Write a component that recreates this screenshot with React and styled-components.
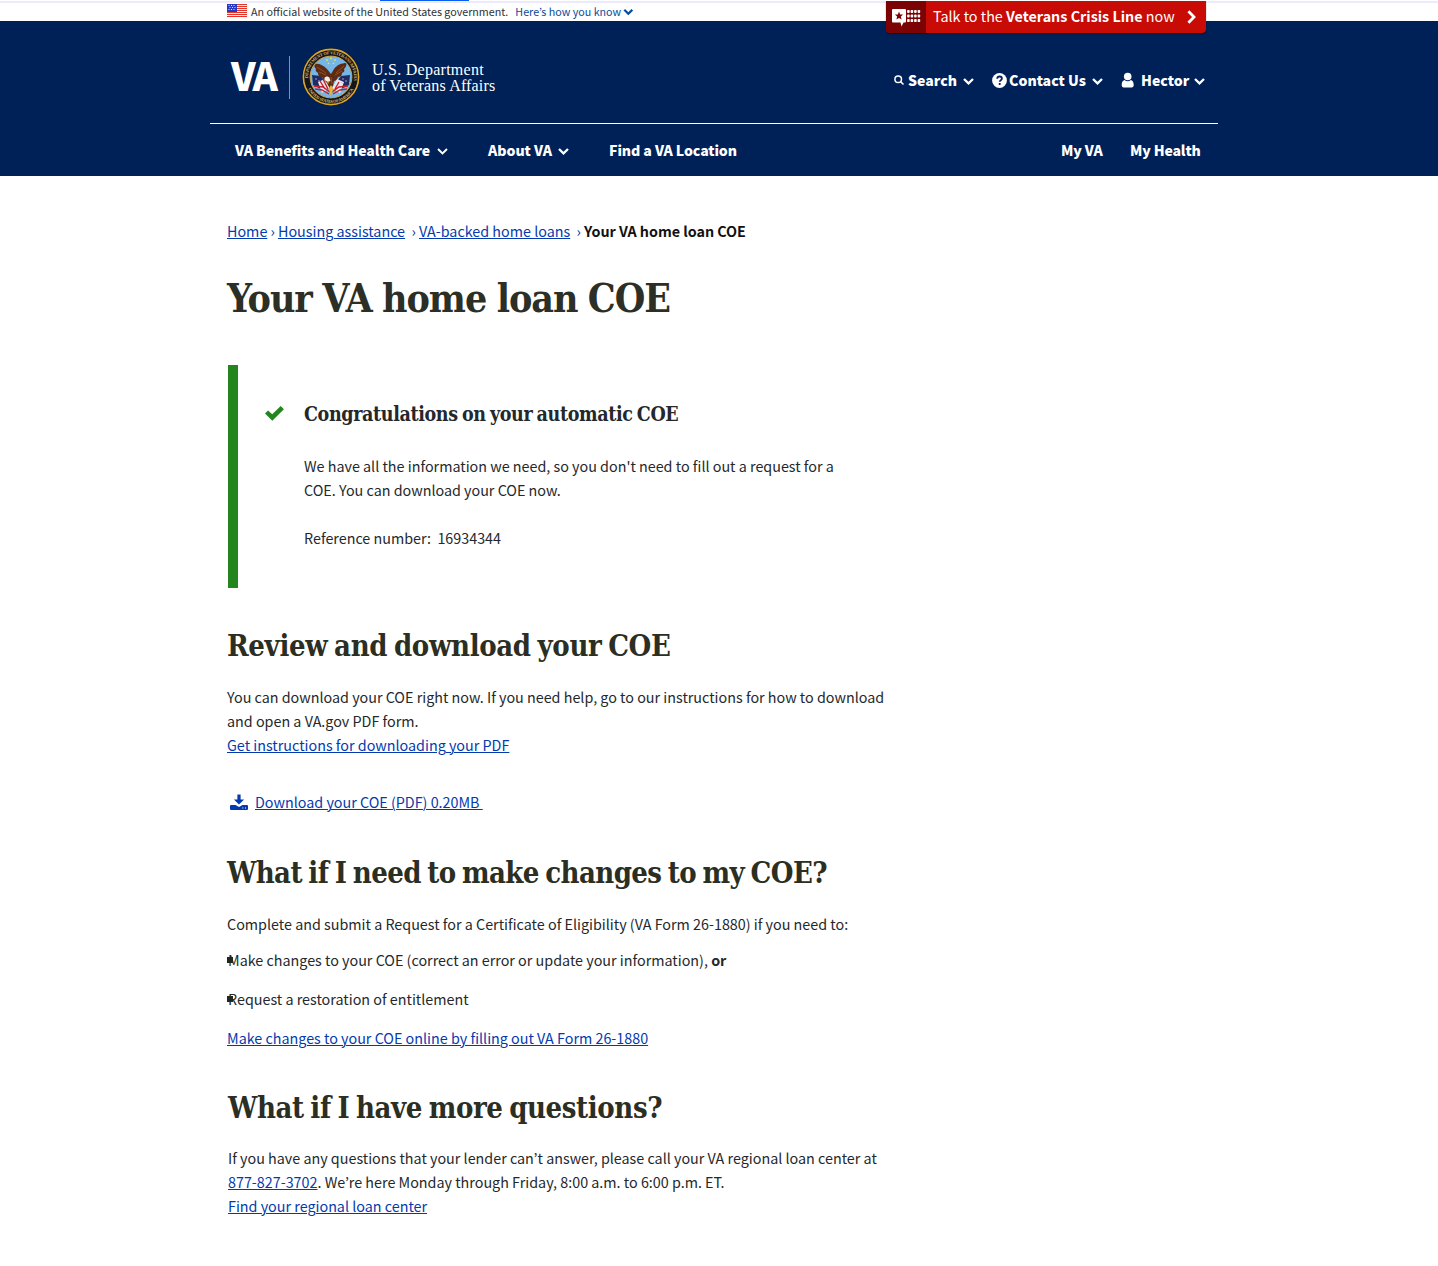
import React from "react";
import styled, { createGlobalStyle } from "styled-components";

const navy = "#002157";
const link = "#043aae";
const sans = '"Noto Sans CJK KR","Noto Sans CJK SC","Open Sans",sans-serif';
const slab = '"DejaVu Serif Condensed","DejaVu Serif",serif';

const Global = createGlobalStyle`
  body { margin: 0; background: #fff; color: #24282c; font: 400 14.33px/24px ${sans}; }
  h1, h2, h3, p, ul { margin: 0; padding: 0; }
  svg { display: block; flex: none; }
`;

const Page = styled.div`
  min-height: 1266px;
  position: relative;
`;

const GovBanner = styled.div`
  height: 21px;
  box-sizing: border-box;
  padding: 3px 0 0 227px;
  display: flex;
  align-items: flex-start;
  background: linear-gradient(#fff 0 1px, #ecebfd 1px 3px, #fff 3px);
`;

const BannerText = styled.span`
  height: 18px;
  white-space: pre;
  font-size: 10.72px;
  line-height: 18px;
  color: ${p => p.$color || "#2c2f38"};
  margin-left: ${p => p.$gap}px;
`;

const LoadingStrip = styled.div`
  position: absolute;
  top: 0;
  left: 380px;
  width: 89px;
  height: 1px;
  background: #0b5ff0;
`;

const CrisisLine = styled.a`
  position: absolute;
  top: 1px;
  left: 886px;
  width: 320px;
  height: 32px;
  display: flex;
  align-items: center;
  background: #c90b05;
  border-radius: 0 0 4px 4px;
  box-shadow: 0 1px 1px 0 #100818;
  color: #fff;
`;

const CrisisBadge = styled.span`
  width: 40px;
  height: 32px;
  box-sizing: border-box;
  padding: 8px 0 0 6px;
  background: #7c0303;
  border-radius: 0 0 0 4px;
`;

const CrisisText = styled.span`
  width: 242px;
  margin: 0 12px 2px 7px;
  white-space: nowrap;
  font-size: 14.33px;
`;

const Header = styled.header`
  height: 155px;
  background: ${navy};
  color: #fff;
`;

const HeaderInner = styled.div`
  width: 1008px;
  margin-left: 210px;
`;

const Masthead = styled.div`
  height: 102px;
  box-sizing: border-box;
  padding: 0 13px 0 21px;
  display: flex;
  align-items: flex-start;
  justify-content: space-between;
`;

const Logo = styled.div`
  display: flex;
  align-items: flex-start;
`;

const Wordmark = styled.span`
  margin-top: 29px;
  width: 58px;
  font-size: 38.5px;
  font-weight: 900;
  line-height: 48px;
  letter-spacing: -2.4px;
`;

const Rule = styled.span`
  width: 1px;
  height: 43px;
  margin-top: 35px;
  background: #8391ad;
`;

const SealBox = styled.div`
  margin: 27px 12px 0 12px;
`;

const Department = styled.div`
  margin-top: 41px;
  font: 400 16px/16px "Liberation Serif", serif;
`;

const DeptLine = styled.div`
  height: 16px;
  letter-spacing: ${p => p.$spacing}px;
  white-space: nowrap;
`;

const Tools = styled.div`
  display: flex;
  align-items: center;
  height: 24px;
  margin-top: 47px;
`;

const Tool = styled.a`
  display: flex;
  align-items: center;
  margin-left: ${p => p.$gap}px;
`;

const ToolLabel = styled.span`
  width: ${p => p.$width}px;
  margin: 0 ${p => p.$after}px 0 ${p => p.$before}px;
  font-weight: 900;
  font-size: 14.1px;
  white-space: nowrap;
`;

const Nav = styled.nav`
  height: 52px;
  border-top: 1px solid #fff;
  box-sizing: border-box;
  padding: 14px 0 0 25px;
  display: flex;
`;

const NavItem = styled.a`
  display: flex;
  align-items: center;
  height: 24px;
  width: ${p => p.$width}px;
  font-weight: 900;
  font-size: 14.1px;
  white-space: nowrap;
  letter-spacing: ${p => p.$spacing || 0}px;
`;

const NavLabel = styled.span`
  width: ${p => p.$width}px;
  margin-right: 7px;
`;

const ChevronBox = styled.span`
  padding-top: 2px;
`;

const Main = styled.main`
  width: 700px;
  padding: 43px 0 0 227px;
`;

const Crumbs = styled.nav`
  display: flex;
  height: 24px;
  white-space: pre;
`;

const Crumb = styled.span`
  width: ${p => p.$width}px;
  font-weight: ${p => (p.$current ? 700 : 400)};
  color: ${p => (p.$current ? "#111" : link)};
  letter-spacing: ${p => (p.$current ? "-0.03px" : "0")};
`;

const Link = styled.a`
  color: ${link};
  text-decoration: underline;
  text-decoration-thickness: 1px;
  text-underline-offset: 1px;
  white-space: pre;
`;

const Title = styled.h1`
  margin-top: 31px;
  padding-bottom: 1px;
  font: 700 39px/48px ${slab};
  letter-spacing: -1.08px;
  word-spacing: -0.6px;
  color: #2c2f26;
  white-space: nowrap;
`;

const Heading = styled.h2`
  margin: ${p => p.$top}px 0 0 ${p => p.$indent || 0}px;
  font: 700 29px/36px ${slab};
  letter-spacing: ${p => p.$spacing}px;
  word-spacing: -2px;
  color: #2b2e22;
  white-space: nowrap;
`;

const Alert = styled.section`
  margin: 42px 0 0 1px;
  height: 223px;
  box-sizing: border-box;
  border-left: 10px solid #23851e;
  padding: 37px 0 0 27px;
  display: flex;
`;

const AlertBody = styled.div`
  margin-left: 20px;
`;

const AlertTitle = styled.h3`
  font: 700 19.5px/24px ${slab};
  letter-spacing: -0.37px;
  word-spacing: -1.5px;
  white-space: nowrap;
  margin-bottom: 27px;
  padding-top: 1px;
`;

const CheckBox = styled.div`
  margin-top: 4px;
`;

const Text = styled.p`
  margin: ${p => p.$top || 0}px 0 0 ${p => p.$indent || 0}px;
  white-space: pre;
`;

const Download = styled.div`
  display: flex;
  align-items: center;
  margin: 33px 0 0 3px;
  gap: 7px;
`;

const List = styled.ul`
  margin-top: 12px;
  list-style: none;
  display: grid;
  gap: 15px;
`;

const Item = styled.li`
  height: 24px;
  padding-left: 1px;
  position: relative;
  white-space: pre;
  &::before {
    content: "";
    position: absolute;
    left: 0;
    top: 9px;
    width: 6px;
    height: 6px;
    background: #22261e;
  }
`;

const Chevron = ({ sw = 2.3 }) => (
  <ChevronBox>
    <svg width="11" height="7" viewBox="0 0 11 7" fill="none" stroke="#fff" strokeWidth={sw}>
      <path d="M1 1 5.5 5.4 10 1" />
    </svg>
  </ChevronBox>
);

const Flag = () => (
  <svg width="20" height="14" viewBox="0 -1 20 14">
    <rect width="20" height="13" fill="#fff" />
    {[0, 2, 4, 6, 8, 10, 12].map(y => <rect key={y} y={y} width="20" height="1.1" fill="#e3342a" />)}
    <rect width="10" height="8" fill="#2438c4" />
    {[1, 3, 5].map(y => [1.5, 4, 6.5].map(x => <rect key={`${x}-${y}`} x={x + (y === 3 ? 1 : 0)} y={y} width="1" height="1" fill="#dfe3ff" />))}
  </svg>
);

const CrisisIcon = () => (
  <svg width="29" height="18" viewBox="0 0 29 18" fill="#fff">
    <path d="M1 0h12a1 1 0 0 1 1 1v11.500a1 1 0 0 1-1 1h-1.500L9.500 17.500 8.500 13.500H1a1 1 0 0 1-1-1V1a1 1 0 0 1 1-1z" />
    <path fill="#7c0303" d="m7 2.600 1.150 2.800 3 .2-2.300 1.950.75 2.950L7 8.900l-2.600 1.600.75-2.950L2.850 5.600l3-.2z" />
    {[2.4, 7, 11.6].map(y => [16.4, 19.9, 23.4, 26.900].map(x => <rect key={`${x}-${y}`} x={x - 1.300} y={y - 1.500} width="2.600" height="3" rx=".9" />))}
  </svg>
);

const NextIcon = () => (
  <svg width="9" height="14" viewBox="0 0 9 14" fill="none" stroke="#fff" strokeWidth="2.800">
    <path d="M1.400 1.200 7 7l-5.600 5.800" />
  </svg>
);

const SearchIcon = () => (
  <svg width="10" height="10" viewBox="0 0 10 10" fill="none" stroke="#fff" strokeWidth="1.500">
    <circle cx="4.200" cy="4.200" r="3.300" />
    <path d="m6.600 6.600 2.900 2.900" />
  </svg>
);

const HelpIcon = () => (
  <svg width="15" height="15" viewBox="0 0 15 15">
    <circle cx="7.500" cy="7.500" r="7.400" fill="#fff" />
    <path d="M5.200 5.700C5.300 4.200 6.300 3.500 7.600 3.500c1.300 0 2.300.8 2.300 2 0 1.700-2.200 1.600-2.200 3.300" fill="none" stroke={navy} strokeWidth="1.800" />
    <rect x="6.700" y="9.900" width="2" height="2" rx=".6" fill={navy} />
  </svg>
);

const UserIcon = () => (
  <svg width="13" height="16" viewBox="-.7 -.5 13 16" fill="#fff">
    <circle cx="6" cy="4" r="3.800" />
    <path d="M2.800 7.600c1.900 1.600 4.500 1.600 6.400 0 2 .5 2.800 2.400 2.800 5 0 1.500-.8 2.400-2 2.400H2C.8 15 0 14.100 0 12.600 0 10 .8 8.100 2.800 7.600z" />
  </svg>
);

const CheckIcon = () => (
  <svg width="19" height="15" viewBox="0 0 19 15">
    <path fill="#23851e" d="m0 7.500 3.100-3.100L7.200 8.300 15.700.1l3.200 3.100L7.300 14.700z" />
  </svg>
);

const DownloadIcon = () => (
  <svg width="18" height="16" viewBox="0 -.5 18 16" fill={link}>
    <path d="M7.400 0h3.200v5h3.500L9 10.100 3.900 5h3.500z" />
    <path d="M1 10.500h4.500L9 12.400l3.500-1.900H17a1 1 0 0 1 1 1v3a1 1 0 0 1-1 1H1a1 1 0 0 1-1-1v-3a1 1 0 0 1 1-1z" />
    <path fill="#fff" d="M12.300 13h1v1h-1zM15 13h1v1h-1z" />
  </svg>
);

const Seal = () => (
  <svg width="58" height="58" viewBox="2 2 58 58">
    <defs>
      <path id="arcTop" d="M8.300 35A23 23 0 1 1 53.700 35" />
      <path id="arcBottom" d="M6.500 39A25.700 25.700 0 0 0 55.500 39" />
      <clipPath id="disc"><circle cx="31" cy="31" r="20.300" /></clipPath>
    </defs>
    <circle cx="31" cy="31" r="28.800" fill="#16120c" />
    <circle cx="31" cy="31" r="27.600" fill="#14161c" stroke="#d9a62e" strokeWidth="1.600" />
    <circle cx="31" cy="31" r="20.900" fill="#74b6e8" stroke="#c9a24a" strokeWidth="1" />
    <g fill="#d9b866" fontFamily="Liberation Serif, serif" fontWeight="700" fontSize="4.400">
      <text><textPath href="#arcTop" startOffset="3" textLength="76">DEPARTMENT OF VETERANS AFFAIRS</textPath></text>
      <text><textPath href="#arcBottom" startOffset="4" textLength="56">UNITED STATES OF AMERICA</textPath></text>
    </g>
    <g clipPath="url(#disc)">
      <g fill="#e8e052">
        {[[31, 12.500], [27, 14], [35, 14], [28.500, 17.300], [33.500, 17.300]].map(([x, y]) => <circle key={x} cx={x} cy={y} r=".9" />)}
      </g>
      <path fill="#222c63" d="M12 29 21 30 26 37 21 43 13 39zM50 29l-9 1-5 7 5 6 8-4z" />
      <path fill="#e9e6ef" d="m18 36 7-3 5 9-8 5zM44 36l-7-3-5 9 8 5z" />
      <path stroke="#c3202b" strokeWidth="1.400" fill="none" d="m14 40 9 1 7 5M15 43l7 1 7 4M20 35l5 8M23 33l5 10M48 40l-9 1-7 5M47 43l-7 1-7 4M39 36l-4 7" />
      <g fill="#c6ccec"><circle cx="16" cy="33" r=".7" /><circle cx="19" cy="35" r=".7" /><circle cx="43" cy="33" r=".7" /><circle cx="46" cy="35" r=".7" /><circle cx="42" cy="37" r=".7" /></g>
      <path fill="#5d2b12" d="M14 18c5-1 9 1 13 5l4 5 3-5c3-4 7-6 13-6-1 3-1 4-3 6 1 2 0 3-2 4 0 3-2 4-4 4-1 3-3 4-4 4l-1 5-3 3-3-6c-2-2-4-4-5-6-2 0-4-1-4-4-2-1-3-3-2-4-1-1-2-3-2-5z" />
      <path stroke="#9b5425" strokeWidth=".9" fill="none" d="m17 21 9 6M19 26l7 3M44 20l-8 7M42 25l-7 4M31 31l1 7" />
      <path fill="#f5efe2" d="M24.500 32c1-2 4-2 5 0l1 3-3 1-3-2z" />
      <path fill="#e8b52c" d="m27 35 2 1-1 2zM29 42l2-3 2 3-1 6-2 1z" />
    </g>
  </svg>
);

export default function App() {
  return (
    <Page>
      <Global />
      <GovBanner>
        <Flag />
        <BannerText $gap={4}>An official website of the United States government.</BannerText>
        <BannerText $gap={7} $color="#0a4a9c">Here’s how you know</BannerText>
        <svg width="12" height="14" viewBox="-2.5 -6.500 12 14" fill="none" stroke="#0a4a9c" strokeWidth="2.200">
          <path d="M.8 .3 4.800 4.300 8.800 .3" />
        </svg>
      </GovBanner>
      <LoadingStrip />
      <Header>
        <HeaderInner>
          <Masthead>
            <Logo>
              <Wordmark>VA</Wordmark>
              <Rule />
              <SealBox><Seal /></SealBox>
              <Department>
                <DeptLine $spacing={0.26}>U.S. Department</DeptLine>
                <DeptLine $spacing={0.16}>of Veterans Affairs</DeptLine>
              </Department>
            </Logo>
            <Tools>
              <Tool $gap={0}><SearchIcon /><ToolLabel $before={4} $after={6} $width={49}>Search</ToolLabel><Chevron /></Tool>
              <Tool $gap={18}><HelpIcon /><ToolLabel $before={2} $after={6} $width={77}>Contact Us</ToolLabel><Chevron /></Tool>
              <Tool $gap={18}><UserIcon /><ToolLabel $before={7} $after={4} $width={49}>Hector</ToolLabel><Chevron /></Tool>
            </Tools>
          </Masthead>
          <Nav>
            <NavItem $width={253} $spacing={-0.1}><NavLabel $width={195}>VA Benefits and Health Care</NavLabel><Chevron sw={1.9} /></NavItem>
            <NavItem $width={121} $spacing={-0.05}><NavLabel $width={63}>About VA</NavLabel><Chevron /></NavItem>
            <NavItem $width={452} $spacing={-0.1}>Find a VA Location</NavItem>
            <NavItem $width={69} $spacing={-0.1}>My VA</NavItem>
            <NavItem $width={71} $spacing={-0.15}>My Health</NavItem>
          </Nav>
        </HeaderInner>
      </Header>
      <CrisisLine>
        <CrisisBadge><CrisisIcon /></CrisisBadge>
        <CrisisText>Talk to the <b>Veterans Crisis Line</b> now</CrisisText>
        <NextIcon />
      </CrisisLine>

      <Main>
        <Crumbs>
          <Crumb $width={51}><Link>Home</Link> ›</Crumb>
          <Crumb $width={141}><Link>Housing assistance</Link>  ›</Crumb>
          <Crumb $width={165}><Link>VA-backed home loans</Link>  ›</Crumb>
          <Crumb $current>Your VA home loan COE</Crumb>
        </Crumbs>
        <Title>Your VA home loan COE</Title>

        <Alert>
          <CheckBox><CheckIcon /></CheckBox>
          <AlertBody>
            <AlertTitle>Congratulations on your automatic COE</AlertTitle>
            <Text>{"We have all the information we need, so you don't need to fill out a request for a\nCOE. You can download your COE now."}</Text>
            <Text $top={24}>{"Reference number:  16934344"}</Text>
          </AlertBody>
        </Alert>

        <Heading $top={40} $spacing={-0.34}>Review and download your COE</Heading>
        <Text $top={21}>{"You can download your COE right now. If you need help, go to our instructions for how to download\nand open a VA.gov PDF form."}</Text>
        <Text><Link>Get instructions for downloading your PDF</Link></Text>
        <Download><DownloadIcon /><Link>{"Download your COE (PDF) 0.20MB "}</Link></Download>

        <Heading $top={41} $spacing={-0.6}>What if I need to make changes to my COE?</Heading>
        <Text $top={21}>Complete and submit a Request for a Certificate of Eligibility (VA Form 26-1880) if you need to:</Text>
        <List>
          <Item>Make changes to your COE (correct an error or update your information), <b>or</b></Item>
          <Item>Request a restoration of entitlement</Item>
        </List>
        <Text $top={15}><Link>Make changes to your COE online by filling out VA Form 26-1880</Link></Text>

        <Heading $top={40} $indent={1} $spacing={-0.39}>What if I have more questions?</Heading>
        <Text $top={20} $indent={1}>If you have any questions that your lender can’t answer, please call your VA regional loan center at</Text>
        <Text $indent={1}><Link>877-827-3702</Link>. We’re here Monday through Friday, 8:00 a.m. to 6:00 p.m. ET.</Text>
        <Text $indent={1}><Link>Find your regional loan center</Link></Text>
      </Main>
    </Page>
  );
}
